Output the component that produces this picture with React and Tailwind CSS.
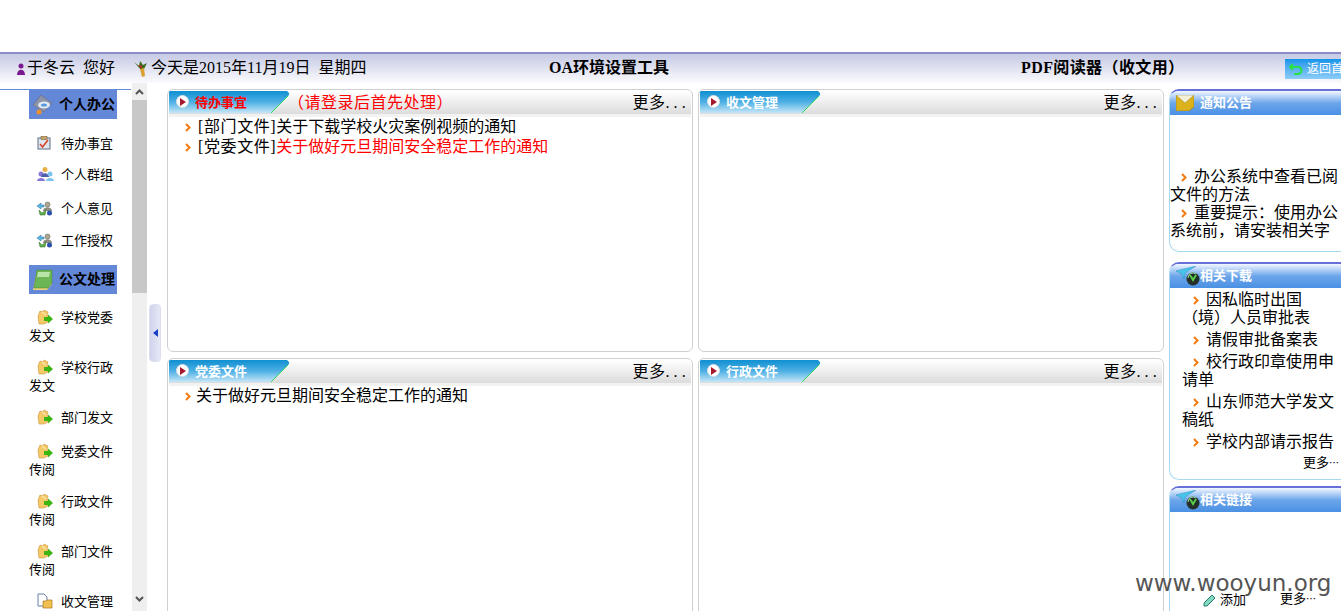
import React from 'react';

const Arrow = () => (
  <svg width="6" height="9" viewBox="0 0 6 9" className="inline-block shrink-0 align-[0px]">
    <path d="M1 1l3.500 3.500L1 8" fill="none" stroke="#f47a10" strokeWidth="2" />
  </svg>
);

const FolderIcon = () => (
  <svg width="16" height="16" viewBox="0 0 16 16" className="inline-block align-[-3px]">
    <path d="M1 7l2-5 3 1 1-2 4 2-1 3 1 1v6l-4 2H2z" fill="#f4c968" stroke="#c8923a" strokeWidth="0.6" />
    <path d="M5 3l4 3" stroke="#fff2c8" strokeWidth="1" />
    <path d="M7 8h4V5.500L16 10l-5 4.500V12H7z" fill="#3bb512" />
  </svg>
);

const ClipIcon = () => (
  <svg width="14" height="14" viewBox="0 0 14 14" className="inline-block align-[-2px]">
    <rect x="1" y="2" width="12" height="11" fill="#dfe5ee" stroke="#5f6f85" />
    <rect x="4" y="0.500" width="6" height="3" fill="#c7a565" stroke="#7a6238" strokeWidth="0.6" />
    <path d="M3 8l2.500 3L11 4" fill="none" stroke="#d8432c" strokeWidth="1.600" />
  </svg>
);

const PeopleIcon = () => (
  <svg width="18" height="16" viewBox="0 0 18 16" className="inline-block align-[-3px]">
    <circle cx="4" cy="8" r="2.500" fill="#8a78d8" />
    <path d="M0 15c0-4 8-4 8 0z" fill="#8a78d8" />
    <circle cx="8" cy="3.500" r="2.500" fill="#e8b048" />
    <path d="M4 11c0-5 8-5 8 0z" fill="#5060a8" />
    <circle cx="13" cy="8" r="2.500" fill="#7ec4ee" />
    <path d="M9 15c0-4 8-4 8 0z" fill="#7ec4ee" />
  </svg>
);

const TransferIcon = () => (
  <svg width="16" height="15" viewBox="0 0 16 15" className="inline-block align-[-3px]">
    <path d="M0 5l4-3v2h3v2H4v2z" fill="#58b8e8" stroke="#2a6a90" strokeWidth="0.5" />
    <circle cx="10.500" cy="3.500" r="2.500" fill="#b0a890" stroke="#555" strokeWidth="0.5" />
    <path d="M6 10c0-5 9-5 9 0z" fill="#8d8d80" />
    <path d="M2 9l3 3 4-3-1 5H3z" fill="#62b04a" stroke="#2c6a24" strokeWidth="0.5" />
    <circle cx="12.500" cy="12" r="2.500" fill="#2a50b0" />
  </svg>
);

const DocIcon = () => (
  <svg width="16" height="16" viewBox="0 0 16 16" className="inline-block align-[-3px]">
    <path d="M1 1h6l3 3v9H1z" fill="#fff" stroke="#6a7fa8" />
    <path d="M6 8h3l1-1h5v8H6z" fill="#f0c050" stroke="#a87a20" strokeWidth="0.7" />
  </svg>
);

const DiskIcon = () => (
  <svg width="21" height="22" viewBox="0 0 21 22">
    <path d="M1 11L9 1l11 8-8 9z" fill="#8e94a8" stroke="#5a5f72" strokeWidth="0.5" />
    <ellipse cx="12" cy="11" rx="6" ry="3.500" fill="#dfe8f4" />
    <ellipse cx="12" cy="11" rx="3" ry="1.600" fill="#5a98d8" />
    <circle cx="7" cy="18" r="2.500" fill="#f09028" />
  </svg>
);

const BookIcon = () => (
  <svg width="21" height="22" viewBox="0 0 21 22">
    <path d="M5 1h15v14L15 21H1z" fill="#f2d27a" />
    <path d="M5 1h15v13l-4 5H2z" fill="#6cb656" stroke="#3d7c34" strokeWidth="0.5" />
    <path d="M6 3h12l-1 5H5z" fill="#b8e4a8" />
  </svg>
);

const MailIcon = () => (
  <svg width="18" height="16" viewBox="0 0 18 16">
    <path d="M0 0h18v12L13 16H0z" fill="#dcb21c" stroke="#7a6a20" strokeWidth="0.5" />
    <path d="M0 0l9 8 9-8z" fill="#f4f0d8" stroke="#9a8a50" strokeWidth="0.5" />
  </svg>
);

const PlaneGlobeIcon = () => (
  <svg width="24" height="20" viewBox="0 0 24 20">
    <path d="M0 5L20 0 9 7 8 13 6 8z" fill="#48c4e8" stroke="#1e88b8" strokeWidth="0.4" />
    <circle cx="17" cy="13" r="6.500" fill="#26302a" />
    <path d="M13 9l4 7 4-7-2 0-2 3-2-3z" fill="#58d048" />
    <path d="M12 12a5 5 0 0 1 8-4" fill="none" stroke="#a8e8a0" />
  </svg>
);

const PlayIcon = () => (
  <span className="flex h-[13px] w-[13px] -translate-y-[1px] items-center justify-center rounded-full border border-[#ddd] bg-white">
    <svg width="7" height="8" viewBox="0 0 7 8"><path d="M1 0l6 4-6 4z" fill="#a8182c" /></svg>
  </span>
);

const SideHead = ({ icon, label, className }) => (
  <div className={`ml-[29px] flex h-[29px] w-[88px] items-center bg-[#6488d8] pl-[3px] text-[14px] font-bold text-black ${className}`}>
    <span className="flex w-[27px] shrink-0">{icon}</span>
    <span className="whitespace-nowrap">{label}</span>
  </div>
);

const SideItem = ({ icon, label, className }) => (
  <div className={`ml-[29px] w-[90px] text-[13px] leading-[18px] text-black ${className}`}>
    <span className="ml-[8px] mr-[8px] inline-block w-[16px]">{icon}</span>
    {label}
  </div>
);

function Sidebar() {
  return (
    <div className="flex w-[147px] shrink-0">
      <div className="h-full w-[132px] shrink-0 overflow-hidden pt-[6px]">
        <div className="h-px w-[131px] bg-[#6488d8]" />
        <SideHead icon={<DiskIcon />} label="个人办公" />
        <SideItem className="mt-[16px]" icon={<ClipIcon />} label="待办事宜" />
        <SideItem className="mt-[13px]" icon={<PeopleIcon />} label="个人群组" />
        <SideItem className="mt-[16px]" icon={<TransferIcon />} label="个人意见" />
        <SideItem className="mt-[14px]" icon={<TransferIcon />} label="工作授权" />
        <SideHead className="mt-[15px]" icon={<BookIcon />} label="公文处理" />
        <SideItem className="mt-[15px]" icon={<FolderIcon />} label="学校党委发文" />
        <SideItem className="mt-[14px]" icon={<FolderIcon />} label="学校行政发文" />
        <SideItem className="mt-[14px]" icon={<FolderIcon />} label="部门发文" />
        <SideItem className="mt-[16px]" icon={<FolderIcon />} label="党委文件传阅" />
        <SideItem className="mt-[14px]" icon={<FolderIcon />} label="行政文件传阅" />
        <SideItem className="mt-[14px]" icon={<FolderIcon />} label="部门文件传阅" />
        <SideItem className="mt-[14px]" icon={<DocIcon />} label="收文管理" />
      </div>
      <div className="flex h-[528px] w-[15px] flex-col bg-[#efefef]">
        <div className="flex h-[17px] items-center justify-center">
          <svg width="9" height="6" viewBox="0 0 9 6"><path d="M1 5l3.500-3.500L8 5" fill="none" stroke="#555" strokeWidth="2" /></svg>
        </div>
        <div className="h-[193px] bg-[#c8c8c8]" />
        <div className="mt-auto flex h-[22px] items-center justify-center pb-[2px]">
          <svg width="9" height="6" viewBox="0 0 9 6"><path d="M1 1l3.500 3.500L8 1" fill="none" stroke="#555" strokeWidth="2" /></svg>
        </div>
      </div>
    </div>
  );
}

const Tab = ({ label, red }) => {
  const gradId = red ? 'tabRed' : `tab${label}`;
  return (
    <div className="relative h-[23px] w-[120px] shrink-0">
      <svg width="120" height="23" viewBox="0 0 120 23" className="absolute left-0 top-0">
        <defs>
          <linearGradient id={gradId} x1="0" y1="0" x2="0" y2="1">
            <stop offset="0" stopColor="#0f8fd2" />
            <stop offset="0.5" stopColor="#4eb0e4" />
            <stop offset="1" stopColor="#c6e6f8" />
          </linearGradient>
        </defs>
        <path d="M0 0h118l2 2v2L102 22H0z" fill={`url(#${gradId})`} />
        <path d="M119 5L102 22" stroke="#35d860" strokeWidth="1" />
      </svg>
      <div className="relative flex h-[23px] items-center pl-[7px]">
        <PlayIcon />
        <span className={`ml-[6px] text-[13px] font-bold ${red ? 'text-[#f00]' : 'text-white'}`}>{label}</span>
      </div>
    </div>
  );
};

function MainPanel({ title, red, note, rows }) {
  return (
    <div className="overflow-hidden rounded-[6px] border border-[#d0d0d0] bg-white px-px pt-px">
      <div className="flex h-[23px] items-center bg-gradient-to-b from-white to-[#dcdcdc]">
        <Tab label={title} red={red} />
        {note && <span className="-ml-[1px] text-[16px] tracking-[0.5px] text-[#f00]">{note}</span>}
        <span className="ml-auto pr-[1px] text-[16px] tracking-[0.5px] text-black">
          更多<span className="tracking-[4.200px]">...</span>
        </span>
      </div>
      <div className="h-[3px] bg-[#f2f2f2]" />
      <div className="pl-[16px] text-[16px] leading-[20px] text-black">
        {rows && rows.map((row) => (
          <div key={row.text} className="flex items-center">
            <Arrow />
            {row.prefix ? (
              <span className="ml-[7px]">
                <span className="tracking-[0.6px]">{row.prefix}</span>
                <span className={row.red ? 'text-[#f00]' : ''}>{row.text}</span>
              </span>
            ) : (
              <span className="ml-[5px]">{row.text}</span>
            )}
          </div>
        ))}
      </div>
    </div>
  );
}

const SideTitle = ({ icon, label, iconClass }) => (
  <div className="flex h-[24px] items-center bg-gradient-to-b from-[#f4f8ff] via-[#6ca6ea] to-[#4a90e4] text-[13px] font-bold text-white">
    <span className={`flex shrink-0 ${iconClass}`}>{icon}</span>
    <span>{label}</span>
  </div>
);

const Notice = ({ children }) => (
  <div>
    <span className="ml-[11px] mr-[7px]"><Arrow /></span>
    {children}
  </div>
);

function RightColumn() {
  return (
    <div className="flex w-[200px] shrink-0 flex-col text-[16px] leading-[18px] text-black">
      <div className="h-[163px] overflow-hidden rounded-[10px] border border-t-2 border-[#a8d8f0] border-t-[#6670d8]">
        <SideTitle icon={<MailIcon />} label="通知公告" iconClass="ml-[6px] mr-[6px]" />
        <div className="w-[171px] pt-[53px] leading-[18px]">
          <Notice>办公系统中查看已阅文件的方法</Notice>
          <Notice>重要提示：使用办公系统前，请安装相关字</Notice>
        </div>
      </div>
      <div className="mt-[10px] h-[218px] overflow-hidden rounded-[10px] border border-t-2 border-[#a8d8f0] border-t-[#6670d8]">
        <SideTitle icon={<PlaneGlobeIcon />} label="相关下载" iconClass="ml-[6px] mr-[0px]" />
        <div className="w-[170px] whitespace-nowrap pl-[12px] pt-[3px]">
          <Notice>因私临时出国<br />（境）人员审批表</Notice>
          <div className="mt-[4px]"><Notice>请假审批备案表</Notice></div>
          <div className="mt-[4px]"><Notice>校行政印章使用申<br />请单</Notice></div>
          <div className="mt-[4px]"><Notice>山东师范大学发文<br />稿纸</Notice></div>
          <div className="mt-[4px]"><Notice>学校内部请示报告</Notice></div>
        </div>
        <div className="ml-[133px] mt-[3px] whitespace-nowrap text-[13px]">更多<span className="text-[10px]">⋯</span></div>
      </div>
      <div className="mt-[6px] h-[160px] overflow-hidden rounded-[10px] border border-t-2 border-[#a8d8f0] border-t-[#6670d8]">
        <SideTitle icon={<PlaneGlobeIcon />} label="相关链接" iconClass="ml-[6px] mr-[0px]" />
        <div className="flex items-center pl-[33px] pt-[78px] text-[13px]">
          <svg width="14" height="14" viewBox="0 0 14 14" className="shrink-0">
            <path d="M1 10L9 2l3 3-8 8H1z" fill="#7fd8c0" stroke="#2a7a70" />
          </svg>
          <span className="ml-[3px]">添加</span>
          <span className="ml-[34px]">更多<span className="text-[10px]">⋯</span></span>
        </div>
      </div>
    </div>
  );
}

export default function App() {
  return (
    <div className="relative h-[611px] w-[1341px] overflow-hidden bg-white font-['Liberation_Serif','Noto_Sans_CJK_SC',serif] text-black">
      <div className="h-[52px]" />
      <div className="flex h-[31px] items-center border-t-2 border-[#8c8cc8] bg-gradient-to-b from-[#c6cae4] to-[#fbfbfd] text-[16px]">
        <svg width="8" height="12" viewBox="0 0 8 12" className="ml-[17px] shrink-0">
          <circle cx="4" cy="3" r="2.500" fill="#7a1a90" />
          <path d="M0 12c0-7 8-7 8 0z" fill="#7a1a90" />
        </svg>
        <span className="ml-[2px] w-[107px] -translate-y-[1px] whitespace-pre">于冬云  您好</span>
        <svg width="14" height="17" viewBox="0 0 14 17" className="shrink-0">
          <path d="M0 2l5 4L6 1l3 4 4-2-3 6-3 1z" fill="#3e6a20" />
          <path d="M4 5l4 1-1 3z" fill="#c82820" />
          <path d="M6 9l4-1 1 8-3 1z" fill="#d8a030" />
        </svg>
        <span className="ml-[3px] w-[398px] -translate-y-[1px] whitespace-pre">今天是2015年11月19日  星期四</span>
        <span className="w-[472px] -translate-y-[1px] whitespace-nowrap font-bold">OA环境设置工具</span>
        <span className="w-[264px] -translate-y-[1px] whitespace-nowrap font-bold tracking-[0.4px]">PDF阅读器（收文用）</span>
        <div className="flex h-[20px] w-[56px] shrink-0 items-center overflow-hidden bg-gradient-to-b from-[#0a94ea] to-[#8ccdf8] pl-[4px] text-[12px] text-white">
          <svg width="14" height="12" viewBox="0 0 14 12" className="shrink-0">
            <path d="M4 1L1 4l3 3M1 4h8a3.500 3.500 0 0 1 0 7H5" fill="none" stroke="#28e048" strokeWidth="2" />
          </svg>
          <span className="ml-[4px] whitespace-nowrap">返回首页</span>
        </div>
      </div>
      <div className="flex h-[528px]">
        <Sidebar />
        <div className="ml-[2px] mt-[221px] flex h-[58px] w-[12px] shrink-0 items-center justify-center rounded-[4px] border border-[#dcdff0] bg-gradient-to-r from-[#cfd3ec] to-[#e6e8f6]">
          <svg width="5" height="8" viewBox="0 0 5 8"><path d="M5 0L0 4l5 4z" fill="#1a3ec8" /></svg>
        </div>
        <div className="ml-[6px] mt-[6px] grid h-[532px] shrink-0 grid-cols-[526px_466px] grid-rows-[263px_263px] gap-x-[5px] gap-y-[6px]">
          <MainPanel
            title="待办事宜"
            red
            note="（请登录后首先处理）"
            rows={[
              { prefix: '[部门文件]', text: '关于下载学校火灾案例视频的通知' },
              { prefix: '[党委文件]', text: '关于做好元旦期间安全稳定工作的通知', red: true },
            ]}
          />
          <MainPanel title="收文管理" />
          <MainPanel title="党委文件" rows={[{ text: '关于做好元旦期间安全稳定工作的通知' }]} />
          <MainPanel title="行政文件" />
        </div>
        <div className="ml-[5px] mt-[6px]">
          <RightColumn />
        </div>
      </div>
      <div className="absolute left-[1135px] top-[567px] font-['DejaVu_Sans',sans-serif] text-[23px] leading-[32px] text-[#555] [text-shadow:0_0_2px_#fff]">
        www.wooyun.org
      </div>
    </div>
  );
}
